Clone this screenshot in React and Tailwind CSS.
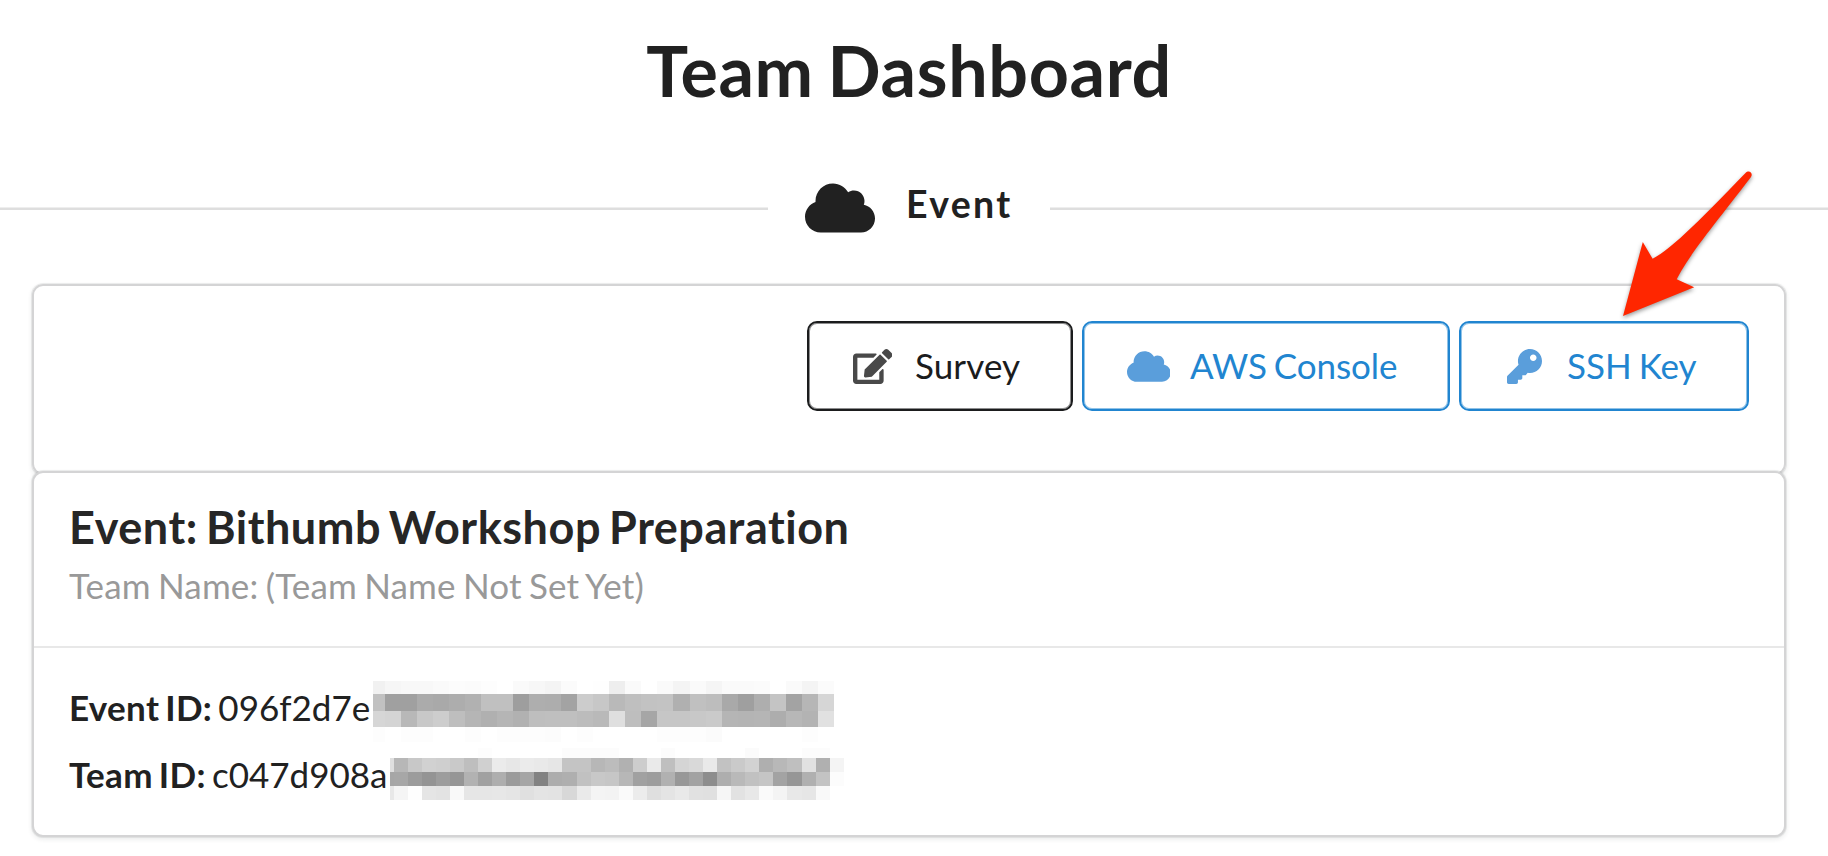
import { FaCloud, FaEdit, FaKey } from "react-icons/fa";

const shades = (s) => s.split(" ").map((h) => `#${h}${h}${h}`);

const eventMask = {
  first: 12,
  cell: 16,
  wide: [19],
  rows: [
    [13, "f1 f6 f8 f8 fa fc fb fd ff fa f7 f4 fb ff fe ee fa ff fa f4 fa f5 fa fa fb ff fa f4 fb"],
    [17, "c1 a0 a0 ab a9 ad b1 c0 c0 9e ae ad a3 cc c7 b9 bf c2 c3 b0 c0 bd a9 9f ae c4 a3 b6 d6"],
    [16, "d6 d4 b8 c8 cd be b5 b0 b5 b1 be bf bf bc b9 df be a6 c6 c6 c8 ca b5 b4 b5 ad b7 b3 e1"],
    [15, "fd ff fd fd ff ff fd ff fd fd fd fc ff fd ff ff ff ff fd fd fd fb ff ff ff ff ff fd ff"],
  ],
};

const teamMask = {
  first: 4,
  cell: 14,
  wide: [13, 29],
  rows: [
    [10, "ff ff ff ff ff ff ff fd ff ff ff ff ff fc fc fc fc ff ff ff fc ff ff ff ff ff fb ff ff ff fc fc ff"],
    [14, "df b7 c8 d1 cf c9 be d0 eb e7 eb e9 e6 c4 c4 b7 bc b1 cd ea bf d5 d9 e9 c2 ca d2 af b8 bf e1 b0 f4"],
    [14, "a6 a7 9c 94 9d 96 b2 a1 ae 9b a5 82 ad af c1 c8 c6 b7 a1 9d b1 98 a2 8d ae b9 c1 c5 a3 96 b0 c3 fc"],
    [14, "e8 f5 fe e5 e3 f9 e6 e6 e7 e5 e0 e4 e3 d8 ea f4 f3 fa ec df e4 e9 e1 e0 f6 e2 e8 fa f4 e8 e6 f9 ff"],
  ],
};

function Mask({ mask }) {
  const width = (i) => (i === 0 ? mask.first : mask.cell + (mask.wide.includes(i) ? 1 : 0));
  return (
    <div className="flex shrink-0 flex-col">
      {mask.rows.map(([height, row], r) => (
        <div key={r} className="flex" style={{ height }}>
          {shades(row).map((c, i) => (
            <div key={i} className="shrink-0" style={{ width: width(i), background: c }} />
          ))}
        </div>
      ))}
    </div>
  );
}

function ActionButton({ icon: Icon, iconClass, label, className }) {
  return (
    <button
      className={`flex h-[90px] items-center rounded-[10px] border-2 pl-[43px] text-[35px] leading-[35px] [word-spacing:-0.055em] ${className}`}
    >
      <span className="mr-[22px] flex w-[41px] shrink-0 justify-center">
        <Icon className={`h-[35px] shrink-0 ${iconClass}`} />
      </span>
      <span className="-mt-[2px] whitespace-nowrap">{label}</span>
    </button>
  );
}

export default function App() {
  return (
    <div className="relative h-[856px] w-[1828px] overflow-hidden bg-white font-[Lato,sans-serif] text-[#212121]">
      <h1 className="w-[1818px] pt-[28px] text-center text-[70px] leading-[84px] font-bold tracking-[0.009em] [word-spacing:-0.055em]">
        Team Dashboard
      </h1>

      <div className="mt-[71px] flex h-[50px] items-center">
        <div className="h-[3px] w-[768px] border-t border-b-2 border-t-[#eeeeee] border-b-[#dedede]" />
        <div className="flex w-[282px] items-center pl-[37px]">
          <FaCloud className="h-[56px] w-[70px] shrink-0" />
          <h4 className="-mt-[9px] ml-[31px] text-[37.5px] leading-[45px] font-bold tracking-[0.062em]">Event</h4>
        </div>
        <div className="h-[3px] flex-1 border-t border-b-2 border-t-[#eeeeee] border-b-[#dedede]" />
      </div>

      <main className="ml-[32px] flex w-[1754px] flex-col pt-[51px]">
        <section className="flex h-[191px] justify-end rounded-[11px] border-2 border-[#d4d4d5] pt-[35px] pr-[35px] shadow-[0_0_0_1px_rgba(34,36,38,0.07),0_2px_5px_rgba(34,36,38,0.10)]">
          <div className="flex gap-[9px]">
            <ActionButton
              icon={FaEdit}
              iconClass="w-[39.4px] text-[#494949]"
              label="Survey"
              className="w-[266px] border-[#1b1c1d] tracking-[0.003em] text-[#1b1c1d] shadow-[inset_0_0_0_1px_rgba(27,28,29,0.5)]"
            />
            <ActionButton
              icon={FaCloud}
              iconClass="ml-[2px] w-[43.75px] text-[#5a9edb]"
              label="AWS Console"
              className="w-[368px] border-[#2185d0] tracking-[-0.003em] text-[#2185d0] shadow-[inset_0_0_0_1px_rgba(33,133,208,0.5)]"
            />
            <ActionButton
              icon={FaKey}
              iconClass="w-[35px] text-[#5a9edb]"
              label="SSH Key"
              className="w-[290px] border-[#2185d0] text-[#2185d0] shadow-[inset_0_0_0_1px_rgba(33,133,208,0.5)]"
            />
          </div>
        </section>

        <section className="-mt-[4px] h-[366px] rounded-[11px] border-2 border-[#d4d4d5] bg-white shadow-[0_0_0_1px_rgba(34,36,38,0.07),0_2px_5px_rgba(34,36,38,0.10)]">
          <div className="h-[175px] border-b-2 border-[#e8e8e8] pt-[25px] pl-[35px]">
            <h2 className="text-[45px] leading-[58px] font-bold tracking-[0.012em] text-[#262626] [word-spacing:-0.075em]">
              Event: Bithumb Workshop Preparation
            </h2>
            <p className="mt-[8px] text-[35px] leading-[42px] tracking-[0.005em] text-[#999999] [word-spacing:-0.055em]">
              Team Name: (Team Name Not Set Yet)
            </p>
          </div>
          <div className="flex flex-col pt-[33px] pl-[35px] text-[35px] leading-[50px] [word-spacing:-0.08em]">
            <div className="flex h-[67px]">
              <div className="h-[51px] w-[304px] shrink-0 pt-[1px] whitespace-nowrap">
                <b className="tracking-[0.009em]">Event ID:</b> 096f2d7e
              </div>
              <Mask mask={eventMask} />
            </div>
            <div className="flex h-[60px]">
              <div className="h-[51px] w-[321px] shrink-0 pt-[1px] whitespace-nowrap">
                <b className="tracking-[0.009em]">Team ID:</b> c047d908a
              </div>
              <Mask mask={teamMask} />
            </div>
          </div>
        </section>
      </main>

      <svg
        className="absolute top-[150px] left-[1600px] drop-shadow-[0_2px_2px_rgba(0,0,0,0.4)]"
        width="180"
        height="180"
        viewBox="1600 150 180 180"
      >
        <path
          fill="#ff2600"
          d="M1623 316 L1642.8 242 L1652.6 258.7 C1672 249 1706 214 1745.5 173 C1749 169.500 1753.500 173 1751 177 C1716 223 1690 253 1676.700 279.300 L1694.200 287.300 Z"
        />
      </svg>
    </div>
  );
}
